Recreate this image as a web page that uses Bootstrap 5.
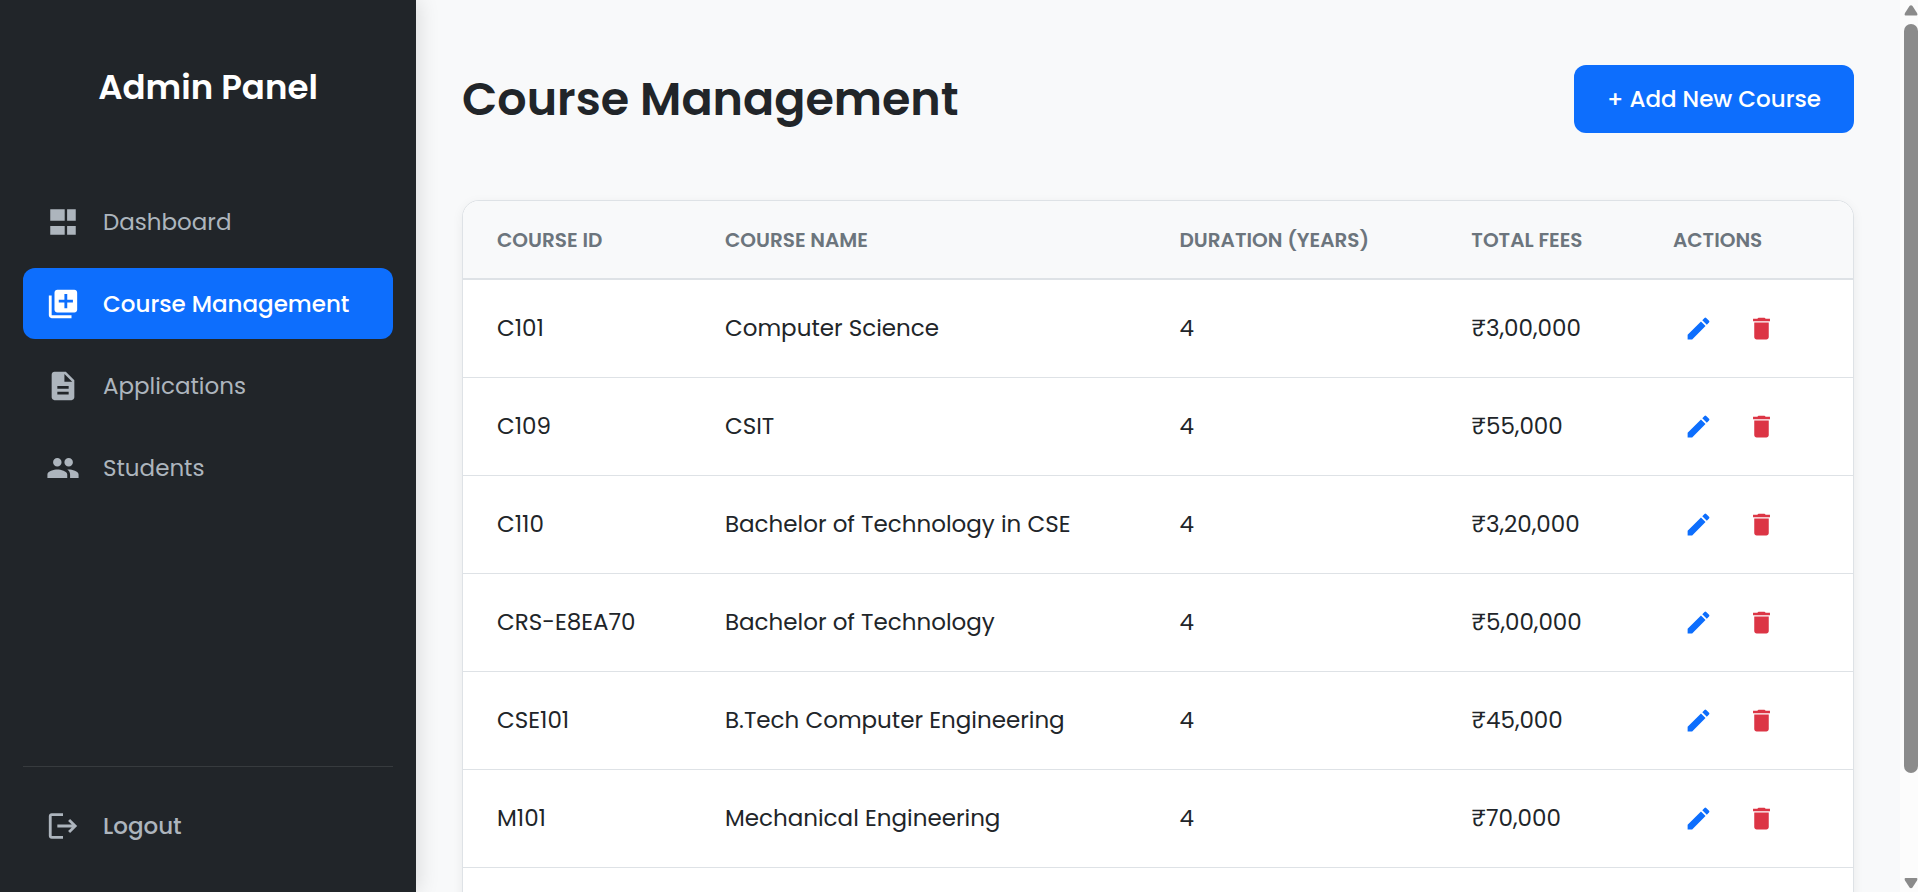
<!DOCTYPE html>
<html lang="en">
<head>
<meta charset="utf-8">
<meta name="viewport" content="width=device-width, initial-scale=1">
<title>Course Management</title>
<link href="https://cdn.jsdelivr.net/npm/bootstrap@5.3.0/dist/css/bootstrap.min.css" rel="stylesheet">
<style>
  body { font-family: Poppins, Inter, "Noto Sans", sans-serif; font-size: 23px; line-height: 36px; color: #212529; }
  .side-panel { width: 416px; background: #212529; padding: 23px; box-shadow: 3px 0 20px rgba(0, 0, 0, .12); z-index: 2; }
  .brand-title { font-size: 34px; line-height: 40px; padding: 44px 0 79px; }
  .side-link { color: #adb5bd; border-radius: 12px; padding: 0 23px; gap: 23px; height: 71px; border: 0; background: none; }
  .side-link svg { width: 34px; height: 34px; }
  .side-link.current { background: #0d6efd; color: #fff; }
  .side-list { gap: 11px; }
  .side-foot { border-top: 1px solid #373b3e; padding: 23px 0 8px; }
  .page-area { padding: 65px 64px 0 46px; scrollbar-width: none; }
  .page-title { font-size: 46px; line-height: 56px; }
  .add-btn { font-size: 23px; line-height: 36px; padding: 16px 33px; border-radius: 12px; background: #0d6efd; }
  .table-box { margin-top: 67px; border: 1px solid #dee2e6; border-radius: 17px; box-shadow: 0 3px 12px rgba(0, 0, 0, .06); background: #fff; }
  .course-table { table-layout: fixed; }
  .course-table th, .course-table td { padding: 0 34px; vertical-align: middle; white-space: nowrap; color: #212529; }
  .course-table th { height: 78px; font-size: 20px; font-weight: 600; color: #6c757d; background: #f8f9fa; border-bottom: 2px solid #dee2e6; text-transform: uppercase; }
  .course-table td { height: 98px; border-bottom: 1px solid #dee2e6; }
  .w-id { width: 16.4%; } .w-name { width: 32.7%; } .w-years { width: 21%; } .w-fees { width: 14.5%; }
  .action-set { gap: 12px; }
  .icon-btn { border: 0; background: none; padding: 11px; line-height: 0; }
  .icon-btn svg { width: 29px; height: 29px; }
  .scroll-rail { width: 18px; background: #fcfcfc; z-index: 3; padding-left: 4px; }
  .scroll-thumb { background: #8b8b8b; border-radius: 7px; margin: 8px 0; height: 84%; }
</style>
</head>
<body class="bg-light overflow-hidden">
<svg class="d-none" aria-hidden="true">
  <symbol id="i-edit" viewBox="0 0 24 24"><path d="M3 17.25V21h3.75L17.81 9.94l-3.75-3.75L3 17.25zM20.71 7.04a1 1 0 0 0 0-1.41l-2.34-2.34a1 1 0 0 0-1.41 0l-1.83 1.83 3.75 3.75 1.83-1.83z"/></symbol>
  <symbol id="i-trash" viewBox="0 0 24 24"><path d="M6 19c0 1.1.9 2 2 2h8c1.1 0 2-.9 2-2V7H6v12zM19 4h-3.500l-1-1h-5l-1 1H5v2h14V4z"/></symbol>
</svg>
<div class="d-flex vh-100">
  <aside class="side-panel d-flex flex-column flex-shrink-0">
    <h2 class="brand-title text-white text-center fw-semibold m-0">Admin Panel</h2>
    <nav class="side-list d-flex flex-column">
      <a href="#" class="side-link d-flex align-items-center text-decoration-none">
        <svg viewBox="0 0 24 24" fill="currentColor" aria-hidden="true"><path d="M3 3h10.200v8.200H3zM14.900 3H21v8.200h-6.100zM3 14.800h10.200V21H3zM14.900 14.800H21V21h-6.100z"/></svg>
        <span>Dashboard</span></a>
      <a href="#" class="side-link current fw-medium d-flex align-items-center text-decoration-none" aria-current="page">
        <svg viewBox="0 0 24 24" fill="currentColor" aria-hidden="true"><path d="M4 6H2v14c0 1.100.9 2 2 2h14v-2H4V6zm16-4H8c-1.100 0-2 .9-2 2v12c0 1.100.9 2 2 2h12c1.100 0 2-.9 2-2V4c0-1.100-.9-2-2-2zm-1 9h-4v4h-2v-4H9V9h4V5h2v4h4v2z"/></svg>
        <span>Course Management</span></a>
      <a href="#" class="side-link d-flex align-items-center text-decoration-none">
        <svg viewBox="0 0 24 24" fill="currentColor" aria-hidden="true"><path d="M14 2H6c-1.100 0-2 .9-2 2v16c0 1.100.9 2 2 2h12c1.100 0 2-.9 2-2V8l-6-6zm2 16H8v-2h8v2zm0-4H8v-2h8v2zm-3-5V3.500L18.500 9H13z"/></svg>
        <span>Applications</span></a>
      <a href="#" class="side-link d-flex align-items-center text-decoration-none">
        <svg viewBox="0 0 24 24" fill="currentColor" aria-hidden="true"><path d="M16 11c1.660 0 2.990-1.340 2.990-3S17.660 5 16 5s-3 1.340-3 3 1.340 3 3 3zm-8 0c1.660 0 2.990-1.340 2.990-3S9.660 5 8 5 5 6.340 5 8s1.340 3 3 3zm0 2c-2.330 0-7 1.170-7 3.500V19h14v-2.500c0-2.330-4.670-3.500-7-3.500zm8 0c-.29 0-.62.020-.97.050 1.160.84 1.970 1.970 1.970 3.450V19h6v-2.500c0-2.330-4.670-3.500-7-3.500z"/></svg>
        <span>Students</span></a>
    </nav>
    <div class="side-foot mt-auto">
      <button type="button" class="side-link fw-medium w-100 d-flex align-items-center">
        <svg viewBox="0 0 24 24" fill="currentColor" aria-hidden="true"><path d="M17 7l-1.410 1.410L18.170 11H8v2h10.170l-2.580 2.580L17 17l5-5zM4 5h8V3H4c-1.100 0-2 .9-2 2v14c0 1.100.9 2 2 2h8v-2H4z"/></svg>
        <span>Logout</span></button>
    </div>
  </aside>
  <main class="page-area flex-grow-1 vh-100 overflow-auto">
    <header class="d-flex justify-content-between align-items-center">
      <h1 class="page-title fw-semibold m-0">Course Management</h1>
      <button type="button" class="add-btn btn btn-primary border-0 fw-medium">+ Add New Course</button>
    </header>
    <div class="table-box overflow-hidden">
      <table class="course-table w-100">
        <colgroup><col class="w-id"><col class="w-name"><col class="w-years"><col class="w-fees"><col></colgroup>
        <thead><tr><th>Course ID</th><th>Course Name</th><th>Duration (Years)</th><th>Total Fees</th><th>Actions</th></tr></thead>
        <tbody id="rows"></tbody>
      </table>
    </div>
  </main>
</div>
<div class="scroll-rail position-fixed top-0 end-0 vh-100 d-flex flex-column" aria-hidden="true">
  <svg width="14" height="16" viewBox="0 0 14 16" fill="#8b8b8b"><path d="M5.500 6Q7 4.500 8.500 6L13 13Q14 15.500 12.500 15.500H1.500Q0 15.500 1 13Z"/></svg>
  <div class="scroll-thumb"></div>
  <svg class="mt-auto" width="14" height="16" viewBox="0 0 14 16" fill="#8b8b8b"><path d="M5.500 11.500Q7 13 8.500 11.500L13 4.500Q14 2 12.500 2H1.500Q0 2 1 4.500Z"/></svg>
</div>
<script src="https://cdn.jsdelivr.net/npm/bootstrap@5.3.0/dist/js/bootstrap.bundle.min.js"></script>
<script>
  const courses = [
    ['C101', 'Computer Science', 4, '₹3,00,000'],
    ['C109', 'CSIT', 4, '₹55,000'],
    ['C110', 'Bachelor of Technology in CSE', 4, '₹3,20,000'],
    ['CRS-E8EA70', 'Bachelor of Technology', 4, '₹5,00,000'],
    ['CSE101', 'B.Tech Computer Engineering', 4, '₹45,000'],
    ['M101', 'Mechanical Engineering', 4, '₹70,000']
  ];
  const icon = (id, cls, label) => `<button type="button" class="icon-btn ${cls}" aria-label="${label}"><svg fill="currentColor"><use href="#${id}"/></svg></button>`;
  document.getElementById('rows').innerHTML = courses.map(c =>
    `<tr>${c.map(v => `<td>${v}</td>`).join('')}<td><div class="action-set d-flex">${icon('i-edit', 'text-primary', 'Edit')}${icon('i-trash', 'text-danger', 'Delete')}</div></td></tr>`
  ).join('') + '<tr><td colspan="5"></td></tr>';
</script>
</body>
</html>
